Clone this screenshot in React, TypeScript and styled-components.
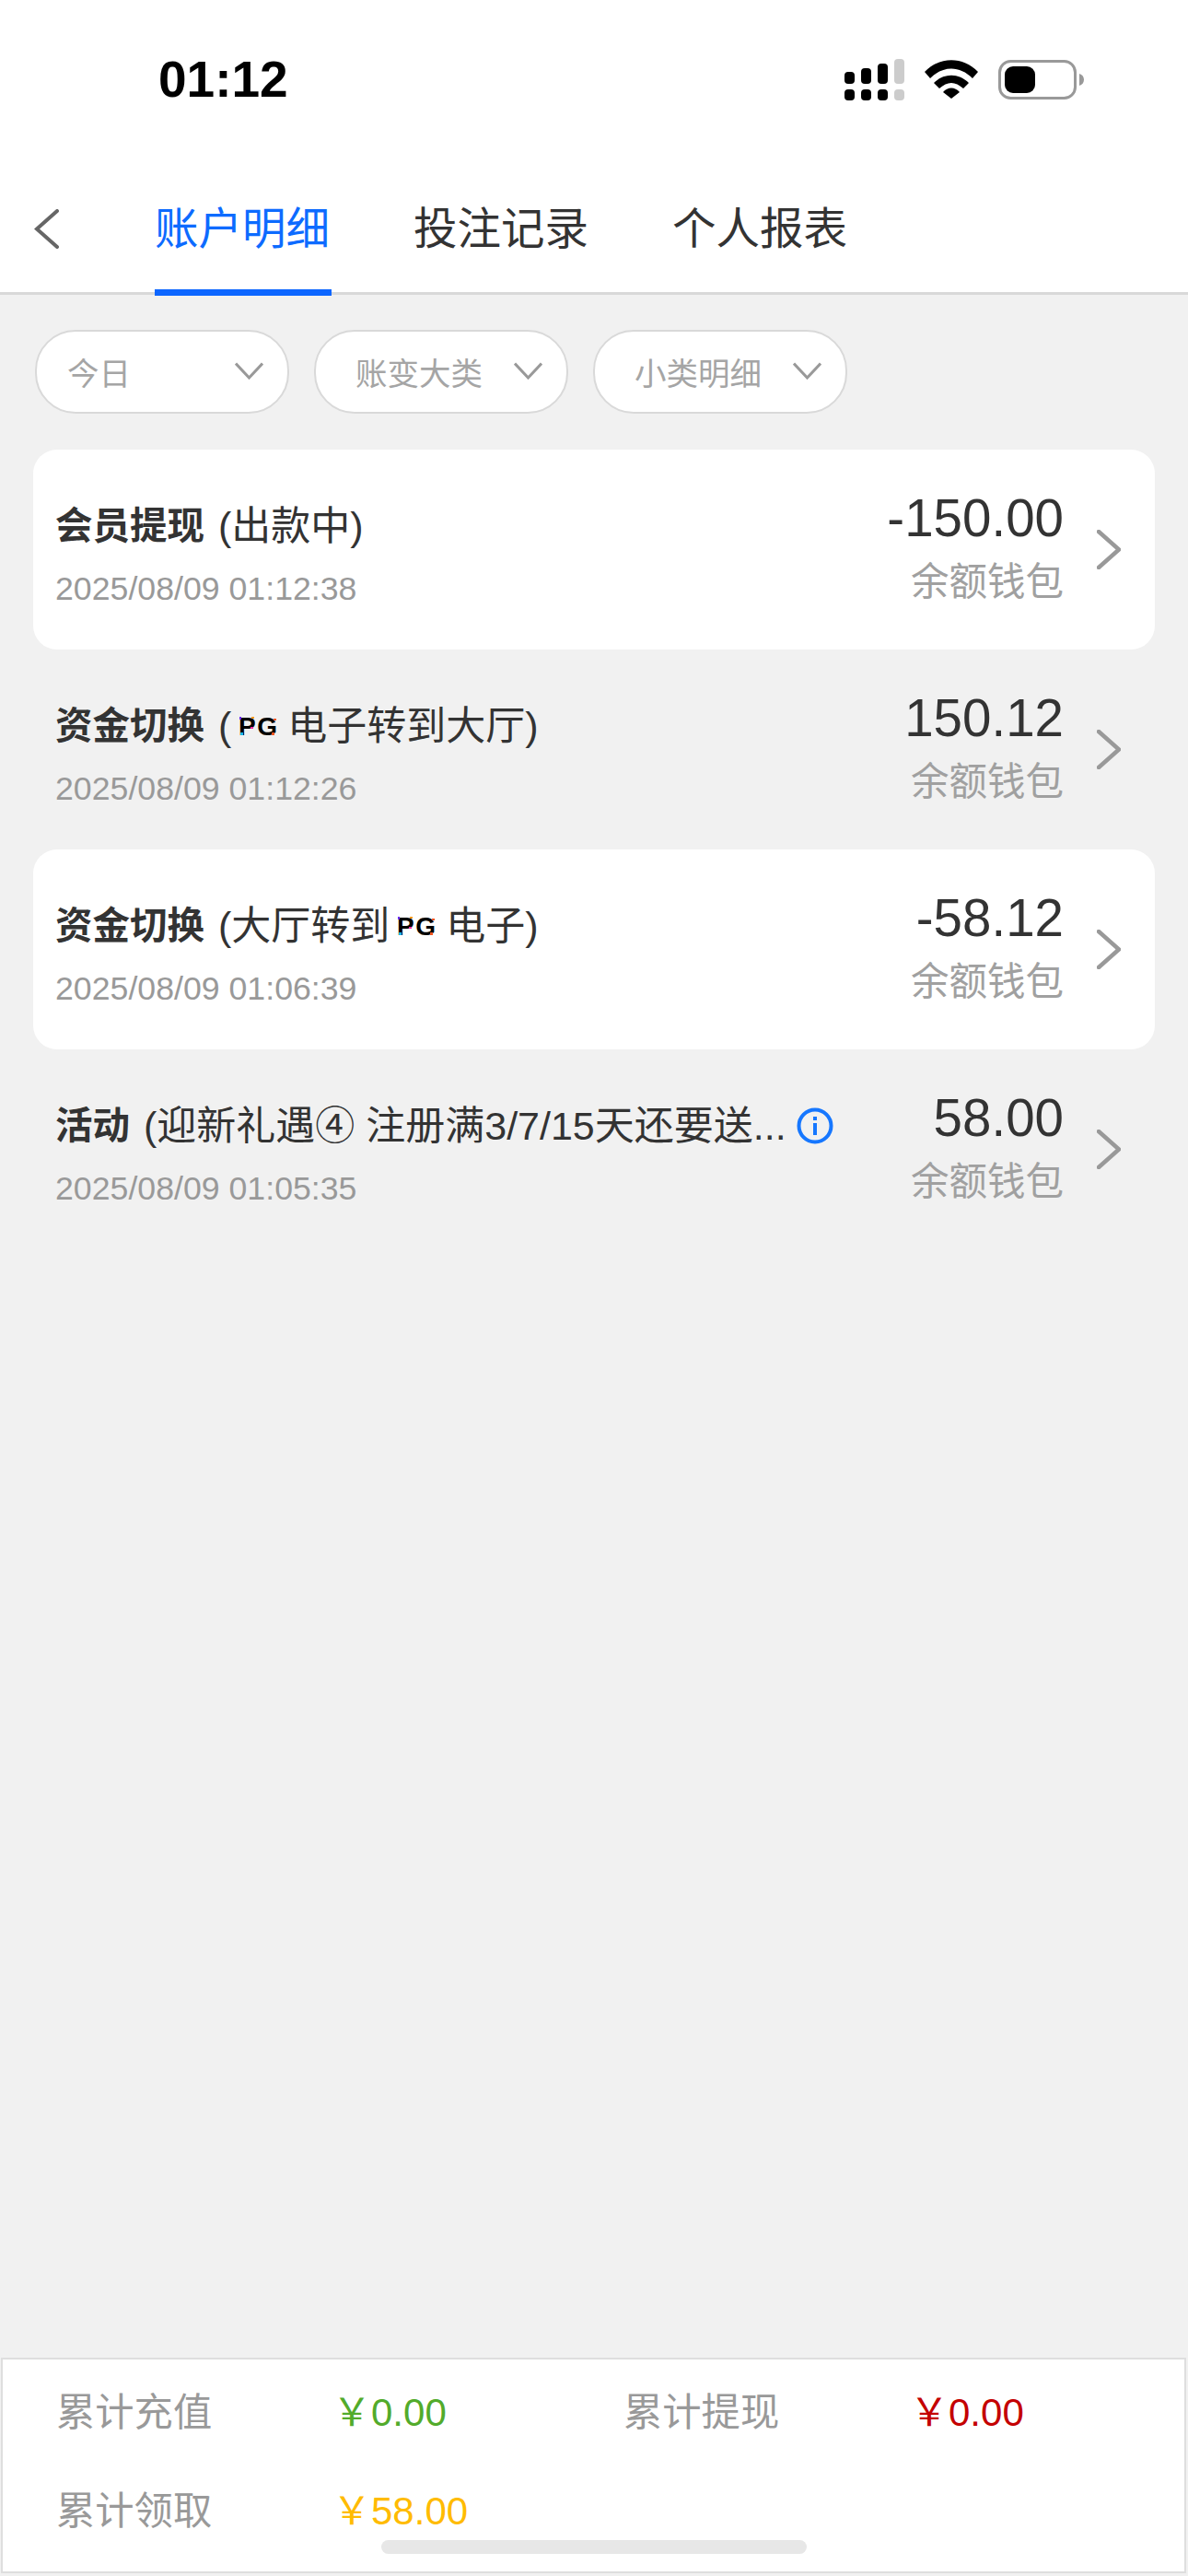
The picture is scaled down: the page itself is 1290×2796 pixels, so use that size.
import styled, { createGlobalStyle } from 'styled-components';

const GlobalStyle = createGlobalStyle`
    body {
        margin: 0;
        background: #f1f1f1;
        font-family: "Liberation Sans", "Noto Sans CJK SC", sans-serif;
    }
`;

const Page = styled.div`
    position: relative;
    width: 1290px;
    height: 2796px;
    display: flex;
    flex-direction: column;
    background: #f1f1f1;
    overflow: hidden;
`;

const StatusBar = styled.div`
    height: 180px;
    box-sizing: border-box;
    padding: 64px 113px 0 172px;
    display: flex;
    align-items: flex-start;
    justify-content: space-between;
    background: #fff;
`;

const Time = styled.div`
    font-size: 55px;
    line-height: 45px;
    font-weight: 700;
    color: #000;
`;

const StatusIcons = styled.div`
    display: flex;
    align-items: flex-start;
    gap: 22px;
`;

const Nav = styled.div`
    height: 140px;
    box-sizing: border-box;
    padding-left: 37px;
    display: flex;
    align-items: flex-start;
    background: #fff;
    border-bottom: 3px solid #d9d9d9;
`;

const Back = styled.svg`
    margin: 47px 104px 0 0;
`;

const Tabs = styled.div`
    display: flex;
    gap: 89px;
`;

const Tab = styled.div<{ $active?: boolean }>`
    position: relative;
    width: 192px;
    height: 137px;
    padding-top: 36px;
    box-sizing: border-box;
    font-size: 47.500px;
    line-height: 66px;
    white-space: nowrap;
    color: ${(p) => (p.$active ? '#0d6bff' : '#333')};

    ${(p) =>
        p.$active &&
        `&::after {
            content: '';
            position: absolute;
            left: 0;
            right: 0;
            bottom: -4px;
            height: 7px;
            background: #0d66ff;
        }`}
`;

const Filters = styled.div`
    margin-top: 38px;
    padding-left: 38px;
    display: flex;
    gap: 27px;
`;

const Filter = styled.div<{ $indent: number }>`
    width: 276px;
    height: 91px;
    box-sizing: border-box;
    padding: 0 26px 2px ${(p) => p.$indent}px;
    display: flex;
    align-items: center;
    justify-content: space-between;
    background: #fff;
    border: 2px solid #d9d9d9;
    border-radius: 44px;
    font-size: 34.500px;
    color: #a5a5a5;
`;

const List = styled.div`
    margin-top: 39px;
    padding: 0 36px;
    display: flex;
    flex-direction: column;
`;

const Row = styled.div<{ $card?: boolean }>`
    height: 217px;
    box-sizing: border-box;
    padding: 0 37px 0 24px;
    display: flex;
    align-items: center;
    border-radius: 26px;
    background: ${(p) => (p.$card ? '#fff' : 'transparent')};
`;

const RowLeft = styled.div`
    flex: 1;
    min-width: 0;
    padding-top: 16px;
`;

const Title = styled.div`
    display: flex;
    align-items: center;
    height: 64px;
    line-height: 64px;
    color: #333;
    white-space: pre;
`;

const TitleStrong = styled.span`
    font-size: 40.500px;
    font-weight: 700;
`;

const TitleDetail = styled.span`
    display: inline-flex;
    align-items: center;
    margin-left: 3px;
    font-size: 43px;
`;

const DateText = styled.div`
    margin-top: 4px;
    font-size: 35.700px;
    line-height: 64px;
    color: #999;
`;

const InfoIcon = styled.svg`
    margin-left: 11px;
    flex-shrink: 0;
`;

const PgLogo = styled.svg`
    margin: 0 11px 0 8px;
    flex-shrink: 0;
`;

const RowRight = styled.div`
    margin-right: 36px;
    text-align: right;
`;

const Amount = styled.div`
    font-size: 56.500px;
    line-height: 70px;
    color: #333;
`;

const Wallet = styled.div`
    font-size: 41.500px;
    line-height: 68px;
    color: #a0a0a0;
`;

const Footer = styled.div`
    margin: auto 2px 3px 1px;
    height: 234px;
    box-sizing: border-box;
    padding: 0 0 0 58px;
    display: grid;
    grid-template-columns: 300px 316px 311px 1fr;
    grid-auto-rows: 107px;
    align-items: center;
    background: #fff;
    border: 2px solid #dedede;
`;

const FooterLabel = styled.div`
    font-size: 42.300px;
    color: #999;
`;

const FooterValue = styled.div<{ $color: string }>`
    font-size: 42px;
    color: ${(p) => p.$color};
`;

const HomeIndicator = styled.div`
    position: absolute;
    left: 414px;
    top: 2757px;
    width: 462px;
    height: 15px;
    border-radius: 8px;
    background: #e7e7e7;
`;

const SignalIcon = () => (
    <svg width="65" height="45" viewBox="0 0 65 45">
        <rect x="0" y="14" width="11" height="13" rx="4" />
        <rect x="18" y="10" width="11" height="17" rx="4" />
        <rect x="36" y="5" width="11" height="22" rx="4" />
        <rect x="54" y="0" width="11" height="27" rx="4" fill="#ccc" />
        <rect x="0" y="33" width="11" height="12" rx="4" />
        <rect x="18" y="33" width="11" height="12" rx="4" />
        <rect x="36" y="33" width="11" height="12" rx="4" />
        <rect x="54" y="33" width="11" height="12" rx="4" fill="#ccc" />
    </svg>
);

const WifiIcon = () => (
    <svg width="58" height="42" viewBox="0 0 58 42" style={{ marginTop: 1 }}>
        <path d="M0 13C16-4 42-4 58 13L52 20C38 6 20 6 6 20Z" />
        <path d="M10 25C21 14 37 14 48 25L42 31C33 23 25 23 16 31Z" />
        <path d="M20 35C25 29 33 29 38 35L29 42Z" />
    </svg>
);

const BatteryIcon = () => (
    <svg width="93" height="43" viewBox="0 0 93 43" style={{ marginTop: 1 }}>
        <rect x="1.5" y="1.5" width="82" height="40" rx="12" fill="none" stroke="#999" strokeWidth="3" />
        <rect x="7" y="7" width="33" height="29" rx="9" />
        <path d="M88 15C91 16 93 18 93 21.500C93 25 91 27 88 28Z" fill="#999" />
    </svg>
);

const FilterChevron = () => (
    <svg width="31" height="19" viewBox="0 0 31 19" fill="none" stroke="#999" strokeWidth="3">
        <path d="M1 1.500L15.500 17L30 1.500" />
    </svg>
);

const RowChevron = () => (
    <svg width="26" height="43" viewBox="0 0 26 43" fill="none" stroke="#999" strokeWidth="4.500" strokeLinecap="round">
        <path d="M2 2L24 21.500L2 41" />
    </svg>
);

// PG vendor mark, kept as text with the small coloured corners of the logo
const Pg = () => (
    <PgLogo width="42" height="34" viewBox="0 0 42 34">
        <text x="0" y="27" fontSize="28" fontWeight="700" fill="#000" letterSpacing="1.500">
            PG
        </text>
        <rect x="1" y="7" width="2" height="3" fill="#6a2cf0" />
        <rect x="2" y="24" width="3" height="3" fill="#18b7e8" />
        <rect x="14" y="7" width="3" height="2" fill="#f79a1e" />
        <rect x="13" y="18" width="3" height="2" fill="#ef2ca0" />
        <rect x="38" y="9" width="3" height="2" fill="#f0541e" />
        <rect x="36" y="24" width="3" height="3" fill="#f0541e" />
    </PgLogo>
);

const rows = [
    { card: true, strong: '会员提现', detail: <> (出款中)</>, date: '2025/08/09 01:12:38', amount: '-150.00' },
    {
        card: false,
        strong: '资金切换',
        detail: <> (<Pg />电子转到大厅)</>,
        date: '2025/08/09 01:12:26',
        amount: '150.12',
    },
    {
        card: true,
        strong: '资金切换',
        detail: <> (大厅转到<Pg />电子)</>,
        date: '2025/08/09 01:06:39',
        amount: '-58.12',
    },
    {
        card: false,
        strong: '活动',
        detail: <> (迎新礼遇④ 注册满3/7/15天还要送...</>,
        date: '2025/08/09 01:05:35',
        amount: '58.00',
        info: true,
    },
];

const filters = [
    { name: '今日', indent: 33 },
    { name: '账变大类', indent: 43 },
    { name: '小类明细', indent: 43 },
];

const App = () => {
    return (
        <Page>
            <GlobalStyle />
            <StatusBar>
                <Time>01:12</Time>
                <StatusIcons>
                    <SignalIcon />
                    <WifiIcon />
                    <BatteryIcon />
                </StatusIcons>
            </StatusBar>
            <Nav>
                <Back width="27" height="43" viewBox="0 0 27 43" fill="none" stroke="#666" strokeWidth="4" strokeLinecap="round">
                    <path d="M25 2L3 21.500L25 41" />
                </Back>
                <Tabs>
                    <Tab $active>账户明细</Tab>
                    <Tab>投注记录</Tab>
                    <Tab>个人报表</Tab>
                </Tabs>
            </Nav>
            <Filters>
                {filters.map((item) => (
                    <Filter key={item.name} $indent={item.indent}>
                        {item.name}
                        <FilterChevron />
                    </Filter>
                ))}
            </Filters>
            <List>
                {rows.map((row) => (
                    <Row key={row.date} $card={row.card}>
                        <RowLeft>
                            <Title>
                                <TitleStrong>{row.strong}</TitleStrong>
                                <TitleDetail>{row.detail}</TitleDetail>
                                {row.info && (
                                    <InfoIcon width="40" height="40" viewBox="0 0 40 40" fill="none" stroke="#1677ff" strokeWidth="4">
                                        <circle cx="20" cy="20" r="17.500" />
                                        <path d="M20 17V30" />
                                        <path d="M20 10V14" />
                                    </InfoIcon>
                                )}
                            </Title>
                            <DateText>{row.date}</DateText>
                        </RowLeft>
                        <RowRight>
                            <Amount>{row.amount}</Amount>
                            <Wallet>余额钱包</Wallet>
                        </RowRight>
                        <RowChevron />
                    </Row>
                ))}
            </List>
            <Footer>
                <FooterLabel>累计充值</FooterLabel>
                <FooterValue $color="#52ab2b">￥0.00</FooterValue>
                <FooterLabel>累计提现</FooterLabel>
                <FooterValue $color="#c40000">￥0.00</FooterValue>
                <FooterLabel>累计领取</FooterLabel>
                <FooterValue $color="#ffbb00">￥58.00</FooterValue>
            </Footer>
            <HomeIndicator />
        </Page>
    );
};

export default App;
